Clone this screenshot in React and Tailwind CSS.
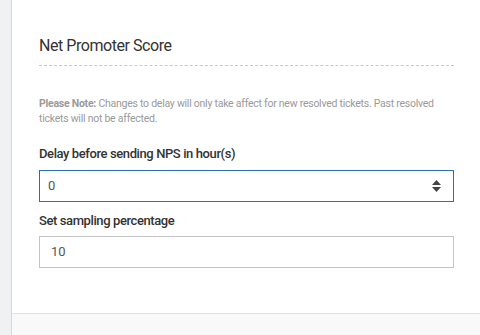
import React from "react";

export default function App() {
  const font = { fontFamily: 'Roboto, "Liberation Sans", Arial, sans-serif' };
  return (
    <div className="flex h-[335px] w-[480px] overflow-hidden bg-white" style={font}>
      <div className="w-[12px] shrink-0 border-r border-[#d6d7d9] bg-[#f0f1f3]" />
      <div className="flex min-w-0 flex-1 flex-col">
        <div className="flex-1 pl-[27px] pr-[26px] pt-[36px]">
          <h2 className="text-[16px] leading-[20px] tracking-[-0.45px] text-[#333]">Net Promoter Score</h2>
          <div className="mt-[9px] border-t border-dashed border-[#c8c8c8]" />
          <p className="mt-[30px] text-[10.5px] leading-[15px] tracking-[-0.25px] text-[#9a9a9a]">
            <span className="font-bold">Please Note:</span> Changes to delay will only take affect for new resolved tickets. Past resolved tickets will not be affected.
          </p>
          <label className="mt-[20px] block text-[13px] font-medium leading-[16px] tracking-[-0.4px] text-[#333]">Delay before sending NPS in hour(s)</label>
          <div className="mt-[8px] flex h-[32px] items-center justify-between border border-[#2b6ead] pl-[8px] pr-[12px] text-[13px] text-[#555]">
            <span>0</span>
            <svg width="9" height="12" viewBox="0 0 9 12">
              <path d="M4.5 0 L9 5 L0 5 Z" fill="#444" />
              <path d="M0 7 L9 7 L4.5 12 Z" fill="#444" />
            </svg>
          </div>
          <label className="mt-[11px] block text-[13px] font-medium leading-[16px] tracking-[-0.4px] text-[#333]">Set sampling percentage</label>
          <div className="mt-[7px] flex h-[32px] items-center border border-[#c4c4c4] pl-[11px] text-[13px] text-[#555]">
            10
          </div>
        </div>
        <div className="h-[22px] shrink-0 border-t border-[#e3e3e3] bg-[#f9f9f9]" />
      </div>
    </div>
  );
}
